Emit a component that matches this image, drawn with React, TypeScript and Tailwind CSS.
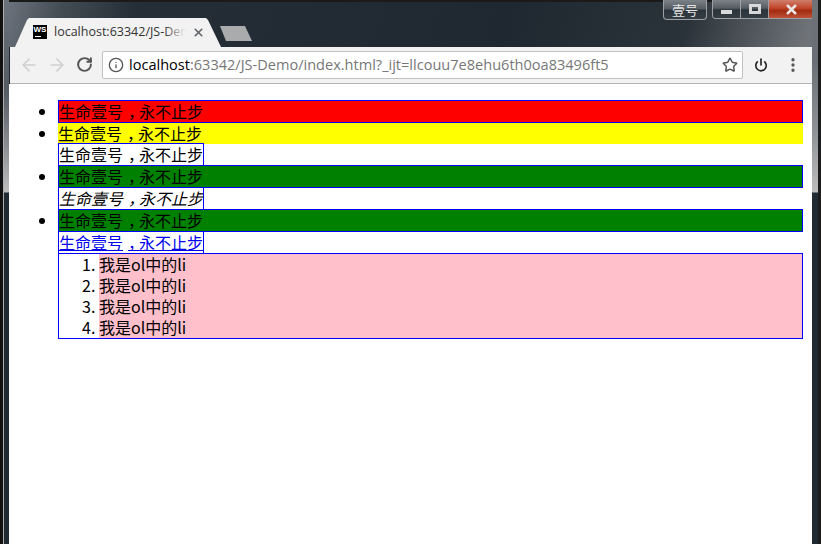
import { ArrowLeft, ArrowRight, Info, MoreVertical, Power, RotateCw, Star, X } from "lucide-react";

const cjk = "font-['Noto_Sans_CJK_SC','Noto_Sans',sans-serif]";
const btnBg = "bg-[linear-gradient(#7d8288,#565c63_45%,#2c343b_55%,#363e45)]";

function Slogan() {
  return (
    <>
      生命壹号<span className="pl-[5px] tracking-[-5px]">，</span>永不止步
    </>
  );
}

function WindowButtons() {
  return (
    <div className="-mr-[3px] flex gap-[5px]">
      <div className={`flex h-5 w-11 items-center justify-center rounded-b-[4px] border border-t-0 border-[#9da1a5] text-[13px] text-[#e6e6e6] ${btnBg} ${cjk}`}>
        壹号
      </div>
      <div className="flex h-[19px] w-[103px] overflow-hidden rounded-b-[4px] border border-t-0 border-[#9da1a5]">
        <div className={`flex w-[28px] items-center justify-center border-r border-[#9da1a5] ${btnBg}`}>
          <div className="mt-[5px] h-[4px] w-[11px] bg-[#d8d8d8]" />
        </div>
        <div className={`flex w-[28px] items-center justify-center border-r border-[#9da1a5] ${btnBg}`}>
          <div className="h-[10px] w-[12px] border-[3px] border-[#d8d8d8]" />
        </div>
        <div className="flex flex-1 items-center justify-center bg-[linear-gradient(#cf7f6c,#c2452a_45%,#a02a0f_60%,#bf5238)]">
          <X size={15} strokeWidth={4} color="#e8e8e8" />
        </div>
      </div>
    </div>
  );
}

function TabStrip() {
  return (
    <div className="flex h-[47px] shrink-0 items-start justify-between bg-[linear-gradient(105deg,#6b727b_0,#454d55_50px,#252e36_125px,#1f2830_62%,#2b333a_84%,#6f7378_99%)] shadow-[inset_0_2px_0_#1a1a1a]">
      <div className="flex items-start pt-[18px]">
        <div className="ml-[6px] flex h-[29px] w-[206px] items-center bg-[#f2f2f2] pb-[1px] pl-[18px] [clip-path:polygon(0_100%,12px_2px,14px_0,191px_0,193px_2px,206px_100%)]">
          <div className="flex h-[14px] w-[14px] shrink-0 flex-col items-center bg-black font-['Liberation_Sans',sans-serif] text-[8px] leading-[10px] font-bold text-white">
            WS
            <div className="mt-px mr-[5px] h-px w-[6px] bg-white" />
          </div>
          <div className="relative ml-[7px] w-[140px] font-['Open_Sans',sans-serif] text-[12.5px] whitespace-nowrap text-[#333]">
            localhost:63342/JS-Dem
            <div className="absolute inset-y-0 right-[8px] w-[22px] bg-[linear-gradient(to_right,transparent,#f2f2f2)]" />
            <div className="absolute inset-y-0 right-0 w-[8px] bg-[#f2f2f2]" />
          </div>
          <X className="-ml-[2px]" size={13} strokeWidth={3} color="#5f6368" />
        </div>
        <div className="mt-2 -ml-[1px] h-[15px] w-[32px] bg-[#a9abad] [clip-path:polygon(0_0,25px_0,32px_100%,6px_100%)]" />
      </div>
      <WindowButtons />
    </div>
  );
}

function Toolbar() {
  return (
    <div className="ml-px flex h-[37px] shrink-0 items-center border-b border-[#b5b5b5] bg-[#f2f2f2] pb-px">
      <ArrowLeft className="ml-[9px]" size={20} strokeWidth={2} color="#d0d0d0" />
      <ArrowRight className="ml-[8px]" size={20} strokeWidth={2} color="#d0d0d0" />
      <RotateCw className="ml-[9px]" size={17} strokeWidth={2.8} color="#555" />
      <div className="ml-[9px] flex h-[28px] w-[641px] items-center rounded-[2px] border border-[#c0c0c0] bg-white">
        <Info className="ml-[5px]" size={16} strokeWidth={2} color="#555" />
        <div className="ml-[5px] flex-1 font-['Open_Sans',sans-serif] text-[14.56px] whitespace-nowrap text-[#777]">
          <span className="text-black">localhost</span>:63342/JS-Demo/index.html?_ijt=llcouu7e8ehu6th0oa83496ft5
        </div>
        <Star className="mr-[4px]" size={16} strokeWidth={2.2} color="#555" />
      </div>
      <Power className="ml-[11px]" size={14} strokeWidth={2.8} color="#222" />
      <MoreVertical className="ml-[16px]" size={18} strokeWidth={2.4} color="#555" />
    </div>
  );
}

function Page() {
  return (
    <div className={`flex-1 bg-white pt-4 pr-[9px] pl-[9px] text-[16px] leading-[21px] text-black ${cjk}`}>
      <ul className="list-disc pl-10">
        <li className="border border-[#00f] bg-[#f00]">
          <Slogan />
        </li>
        <li className="bg-[#ff0]">
          <Slogan />
        </li>
        <li className="list-none">
          <div className="-my-px w-fit border border-[#00f]">
            <Slogan />
          </div>
        </li>
        <li className="border border-[#00f] bg-[#008000]">
          <Slogan />
        </li>
        <li className="list-none">
          <div className="-my-px w-fit border border-[#00f] italic">
            <Slogan />
          </div>
        </li>
        <li className="border border-[#00f] bg-[#008000]">
          <Slogan />
        </li>
        <li className="list-none">
          <a href="#" className="-my-px block w-fit border border-[#00f] text-[#00e] underline">
            <Slogan />
          </a>
        </li>
        <li className="list-none">
          <ol className="list-decimal border border-[#00f] pl-10">
            <li className="bg-[#ffc0cb]">我是ol中的li</li>
            <li className="bg-[#ffc0cb]">我是ol中的li</li>
            <li className="bg-[#ffc0cb]">我是ol中的li</li>
            <li className="bg-[#ffc0cb]">我是ol中的li</li>
          </ol>
        </li>
      </ul>
    </div>
  );
}

export default function App() {
  return (
    <div className="flex h-[544px] w-[821px] overflow-hidden bg-[#1f2830]">
      <div className="w-[9px] shrink-0 border-l-[3px] border-[#111] bg-[linear-gradient(#6b727b_0,#555b63_90px,#8e9296_150px,#bdbdbd_192px,#1f2a32_193px)] shadow-[inset_1px_0_0_#b0b0b0]" />
      <div className="flex w-[803px] shrink-0 flex-col">
        <TabStrip />
        <Toolbar />
        <Page />
      </div>
      <div className="w-[9px] shrink-0 border-r-[3px] border-[#1c1c1c] bg-[linear-gradient(#6f7378_0,#6a6f75_60px,#8e9296_130px,#bdbdbd_192px,#1f2a32_193px)]" />
    </div>
  );
}
